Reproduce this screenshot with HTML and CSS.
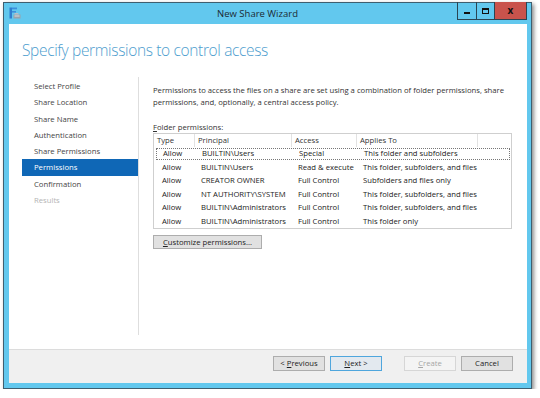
FILE: index.html
```html
<!DOCTYPE html>
<html lang="en">
<head>
  <meta charset="UTF-8" />
  <title>New Share Wizard</title>
  <link rel="stylesheet" href="styles.css">
</head>
<body>
  <div class="window">
    <div class="titlebar">
      <svg class="app-icon" width="12" height="12" viewBox="0 0 12 12">
        <rect x="0.5" y="0.5" width="2.5" height="11" fill="#2f7fd0"/>
        <rect x="3" y="0.5" width="5" height="1.8" fill="#3d8fdc"/>
        <rect x="3" y="4" width="4" height="1.6" fill="#3d8fdc"/>
        <path d="M4.5 7.5 H11.5 V11.5 H4.5 Z" fill="#9aa3ab"/>
        <path d="M5.5 6 H9 L10 7.5 H5.5 Z" fill="#b8c0c7"/>
        <rect x="5.5" y="8.5" width="5" height="1" fill="#d7dde2"/>
      </svg>
      <div class="title">New Share Wizard</div>
      <div class="caption-buttons">
        <div class="cap-btn cap-min"><span class="glyph"></span></div>
        <div class="cap-btn cap-max"><span class="glyph"></span></div>
        <div class="cap-btn cap-close">x</div>
      </div>
    </div>

    <div class="client">
      <div class="body">
        <h1>Specify permissions to control access</h1>
        <div class="main">
          <ul class="steps">
            <li>Select Profile</li>
            <li>Share Location</li>
            <li>Share Name</li>
            <li>Authentication</li>
            <li>Share Permissions</li>
            <li class="current">Permissions</li>
            <li>Confirmation</li>
            <li class="disabled">Results</li>
          </ul>

          <div class="panel">
            <p class="intro">Permissions to access the files on a share are set using a combination of folder permissions, share permissions, and, optionally, a central access policy.</p>
            <div class="label"><u>F</u>older permissions:</div>

            <div class="perm-table">
              <div class="perm-row head">
                <div>Type</div>
                <div>Principal</div>
                <div>Access</div>
                <div>Applies To</div>
                <div></div>
              </div>
              <div class="perm-row selected">
                <div>Allow</div><div>BUILTIN\Users</div><div>Special</div><div>This folder and subfolders</div><div></div>
              </div>
              <div class="perm-row">
                <div>Allow</div><div>BUILTIN\Users</div><div>Read &amp; execute</div><div>This folder, subfolders, and files</div><div></div>
              </div>
              <div class="perm-row">
                <div>Allow</div><div>CREATOR OWNER</div><div>Full Control</div><div>Subfolders and files only</div><div></div>
              </div>
              <div class="perm-row">
                <div>Allow</div><div>NT AUTHORITY\SYSTEM</div><div>Full Control</div><div>This folder, subfolders, and files</div><div></div>
              </div>
              <div class="perm-row">
                <div>Allow</div><div>BUILTIN\Administrators</div><div>Full Control</div><div>This folder, subfolders, and files</div><div></div>
              </div>
              <div class="perm-row">
                <div>Allow</div><div>BUILTIN\Administrators</div><div>Full Control</div><div>This folder only</div><div></div>
              </div>
            </div>

            <button class="btn customize"><u>C</u>ustomize permissions...</button>
          </div>
        </div>
      </div>

      <div class="footer">
        <button class="btn">&lt; <u>P</u>revious</button>
        <button class="btn default"><u>N</u>ext &gt;</button>
        <button class="btn disabled gap"><u>C</u>reate</button>
        <button class="btn">Cancel</button>
      </div>
    </div>
  </div>
</body>
</html>
```

FILE: styles.css
```css
body {
  margin: 0;
  background: #fff;
  font-family: "Open Sans", sans-serif;
  font-size: 7.7px;
  color: #333;
}
.window {
  margin: 2px 0 0 3px;
  width: 527px;
  height: 385px;
  border: 1px solid #3f5f70;
  background: #62c8ee;
  display: flex;
  flex-direction: column;
  box-shadow: 2px 2px 4px rgba(0, 0, 0, 0.45);
}
.titlebar {
  height: 21px;
  display: flex;
  align-items: flex-start;
  padding: 0 4px 0 5px;
}
.app-icon {
  margin-top: 4px;
  display: block;
}
.title {
  flex: 1;
  text-align: center;
  padding-left: 37px;
  font-size: 9.5px;
  line-height: 21px;
  color: #1b2a33;
}
.caption-buttons {
  display: flex;
  margin-top: -1px;
  height: 17px;
  border: 1px solid #2a4553;
  border-top: none;
}
.cap-btn {
  height: 17px;
  display: flex;
  align-items: center;
  justify-content: center;
}
.cap-min {
  width: 18px;
  border-right: 1px solid #2a4553;
}
.cap-min .glyph {
  width: 6px;
  height: 2px;
  background: #111;
  margin-top: 4px;
}
.cap-max {
  width: 17px;
  border-right: 1px solid #2a4553;
}
.cap-max .glyph {
  width: 5px;
  height: 3px;
  border: 1.5px solid #111;
  border-top-width: 2px;
}
.cap-close {
  width: 31px;
  background: #c9534c;
  color: #111;
  font-size: 10px;
  font-weight: 700;
  line-height: 17px;
}
.client {
  flex: 1;
  margin: 0 4px 5px 5px;
  background: #fff;
  display: flex;
  flex-direction: column;
}
.body {
  flex: 1;
  display: flex;
  flex-direction: column;
  padding: 16px 0 14px 13px;
}
h1 {
  margin: 0;
  font-size: 15.5px;
  letter-spacing: -0.35px;
  line-height: 20px;
  font-weight: 300;
  color: #4d9dce;
}
.main {
  flex: 1;
  display: flex;
  margin-top: 17px;
}
.steps {
  list-style: none;
  margin: 0;
  padding: 1px 0 0;
  width: 116px;
  border-right: 1px solid #dedede;
}
.steps li {
  height: 16.3px;
  line-height: 16.3px;
  padding-left: 12px;
  color: #444;
}
.steps li.current {
  background: #0f67b6;
  color: #fff;
}
.steps li.disabled {
  color: #b4b4b4;
}
.panel {
  flex: 1;
  padding: 7px 15px 0 14px;
}
.intro {
  margin: 0;
  line-height: 12px;
}
.label {
  margin-top: 13px;
  line-height: 12px;
}
.perm-table {
  border: 1px solid #cfcfcf;
  height: 94px;
}
.perm-row {
  display: grid;
  grid-template-columns: 41px 97px 65px 121px 1fr;
  height: 13.6px;
  line-height: 13.6px;
  white-space: nowrap;
  color: #222;
}
.perm-row > div {
  padding-left: 6px;
}
.perm-row > div:first-child {
  padding-left: 8px;
}
.perm-row.head {
  height: 13px;
  line-height: 13px;
  color: #333;
}
.perm-row.head > div {
  padding-left: 3px;
  border-right: 1px solid #e2e2e2;
}
.perm-row.head > div:first-child {
  padding-left: 3px;
}
.perm-row.head > div:last-child {
  border-right: none;
}
.perm-row.selected {
  outline: 1px dotted #777;
  outline-offset: -2px;
  margin-left: 1px;
}
.btn {
  font-family: "Open Sans", sans-serif;
  font-size: 7.7px;
  color: #222;
  background: #e1e1e1;
  border: 1px solid #adadad;
  padding: 0;
  height: 15px;
  line-height: 13px;
}
.customize {
  display: block;
  margin-top: 6px;
  width: 109px;
  height: 14px;
  line-height: 12px;
}
.footer {
  height: 27px;
  border-top: 1px solid #dcdcdc;
  background: #f0f0f0;
  display: flex;
  justify-content: flex-end;
  align-items: flex-start;
  gap: 5px;
  padding: 6px 14px 0 0;
}
.footer .btn {
  width: 52px;
}
.btn.default {
  border-color: #4fa6dd;
  background: #e3e9ef;
}
.btn.disabled {
  background: #f4f4f4;
  border-color: #d6d6d6;
  color: #a6a6a6;
}
.btn.gap {
  margin-left: 17px;
}
```
